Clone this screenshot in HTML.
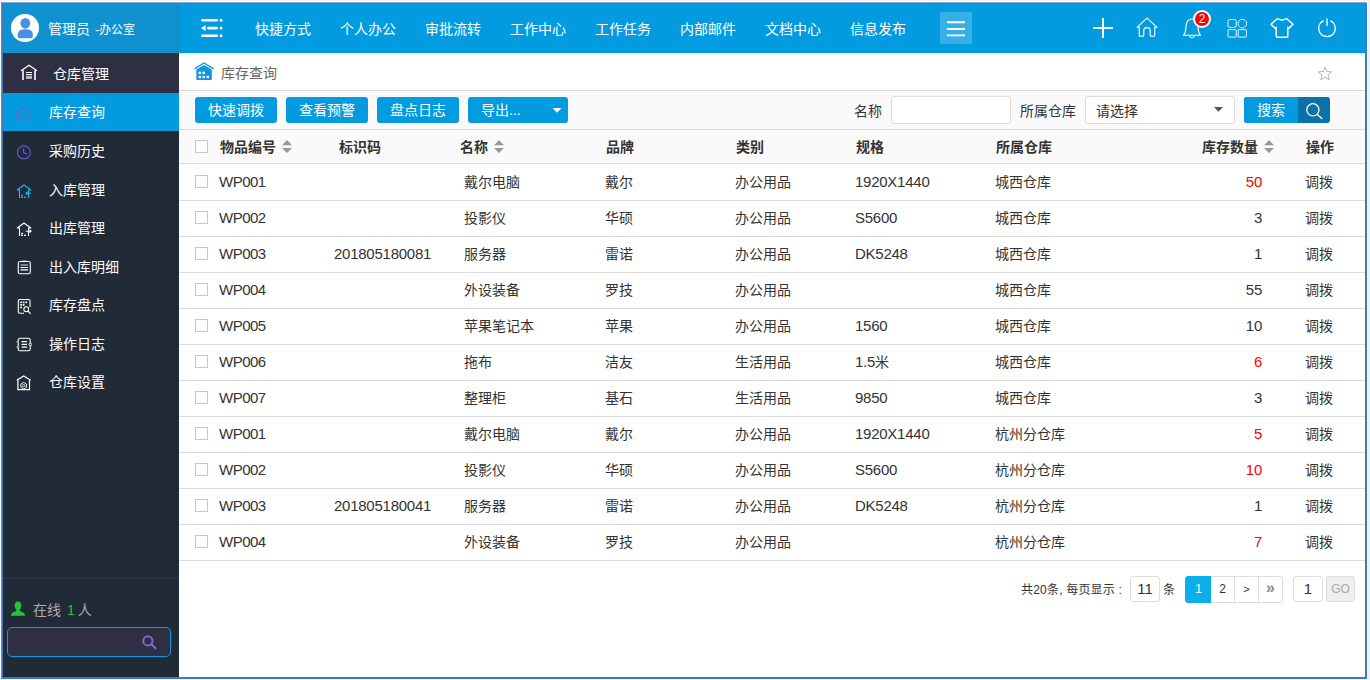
<!DOCTYPE html>
<html lang="zh-CN">
<head>
<meta charset="utf-8">
<title>库存查询</title>
<style>
html,body{margin:0;padding:0}
body{width:1370px;height:680px;position:relative;overflow:hidden;background:#fff;font-family:"Liberation Sans","Noto Sans CJK SC",sans-serif;font-size:14px;color:#333}
div,span,svg,i,b{position:absolute;box-sizing:border-box;display:block;white-space:nowrap;font-style:normal;font-weight:normal}
svg{overflow:visible}
/* window frame */
#fr-top0{left:0;top:0;width:1370px;height:1px;background:#f3f4f6}
#fr-right{left:1367px;top:0;width:3px;height:680px;background:#eeeff0;border-left:1px solid #f8f8f8}
#fr-bot{left:0;top:679px;width:1370px;height:1px;background:#f2f2f2}
#frame{left:1px;top:2px;width:1366px;height:677px;border:2px solid #4078bc;border-top:none;border-left:none}
#fl1{left:1px;top:2px;width:1px;height:677px;background:#5f8ac6}
#fl2{left:2px;top:3px;width:1px;height:674px;background:#4079be}
#ft1{left:1px;top:2px;width:1366px;height:1px;background:#8aa6d2}
#ft2{left:2px;top:3px;width:1363px;height:1px;background:#3f80c4}
/* header */
#uhead{left:3px;top:3px;width:176px;height:50px;background:#1192d0}
#nav{left:179px;top:3px;width:1186px;height:50px;background:#039be0;box-shadow:0 1px 3px rgba(0,0,0,.12)}
#avatar{left:11px;top:14px;width:28px;height:28px;border-radius:50%;background:#fff}
.uname{left:48px;top:18px;height:22px;line-height:22px;font-size:14px;color:#fff}
.uname b{position:static;display:inline;font-size:12px;margin-left:1px}
.nv{top:18px;height:22px;line-height:22px;font-size:14px;color:#fff}
#hbtn{left:940px;top:12px;width:32px;height:32px;background:#37afe7}
#badge{left:1193px;top:10px;width:18px;height:18px;border-radius:50%;background:#f00;border:2px solid #fff;color:#fff;font-size:12px;line-height:14px;text-align:center}
/* sidebar */
#side{left:3px;top:53px;width:176px;height:624px;background:#212a37}
#stitle{left:3px;top:53px;width:176px;height:40px;background:#2e2f43}
#sline{left:3px;top:577px;width:176px;height:2px;background:#2e2f43}
#sact{left:3px;top:93px;width:176px;height:38px;background:#039be0}
.st{left:53px;top:63px;height:22px;line-height:22px;font-size:14px;color:#fff}
.si{left:49px;height:22px;line-height:22px;font-size:14px;color:#fff}
#online{left:33px;top:599px;height:22px;line-height:22px;font-size:14px;color:#a9adb3}
#online{word-spacing:2px}
#online b{position:static;display:inline;color:#21c33b;margin-right:2px;letter-spacing:1px}
#sbox{left:7px;top:627px;width:164px;height:30px;border:1px solid #0c9be0;border-radius:5px;background:#2e2f43}
/* main */
#crumb{left:221px;top:62px;height:22px;line-height:22px;font-size:14px;color:#666}
.hl{left:179px;width:1186px;height:1px;background:#dbdbdb}
#tbar{left:179px;top:91px;width:1186px;height:72px;background:#fafafa}
.btn{top:97px;height:26px;line-height:26px;border-radius:3px;background:#039be0;color:#fff;font-size:14px;text-align:center}
.lbl{top:100px;height:22px;line-height:22px;font-size:14px;color:#333}
.inp{background:#fff;border:1px solid #ddd;border-radius:3px}
.th{top:136px;height:22px;line-height:22px;font-size:14px;font-weight:bold;color:#333}
.sort{top:140px;width:10px;height:13px}
.cb{width:13px;height:13px;border:1px solid #c8c8c8;background:#fff}
.tr{left:179px;width:1186px;height:37px;border-bottom:1px solid #dbdbdb}
.tr .c{top:7px;height:22px;line-height:22px;font-size:14px;color:#333}
.tr span{margin-left:-179px}
.tr .l{font-size:15px;letter-spacing:-.25px}
.tr .c i{position:static;display:inline;font-size:14px;letter-spacing:0}
.tr .q{width:100px;text-align:right}
.tr .red{color:#f00}
/* pager */
.pg{font-size:12px;color:#333;height:20px;line-height:20px;letter-spacing:.2px}
.pb{top:576px;height:27px;border:1px solid #ddd;background:#fff;font-size:12px;line-height:25px;text-align:center;color:#333}

</style>
</head>
<body>
<div id="fr-top0"></div><div id="fr-right"></div><div id="fr-bot"></div>

<!-- header -->
<div id="uhead"></div>
<div id="nav"></div>
<div id="avatar"><svg width="28" height="28" viewBox="0 0 28 28"><ellipse cx="14.3" cy="9.3" rx="4.9" ry="5.4" fill="#4a90e2"/><path d="M6.8 22.8 V20.5 Q6.8 15.2 14.3 15.2 Q21.8 15.2 21.8 20.5 V22.8 Q21.8 24.200 20.400 24.200 H8.200 Q6.800 24.200 6.800 22.800 Z" fill="#4a90e2"/></svg></div>
<div class="uname">管理员 <b>-办公室</b></div>

<svg id="fold" style="left:201px;top:18px" width="22" height="20" viewBox="0 0 22 20"><g fill="#fff"><rect x="0" y="1" width="17" height="2.6" rx="1.3"/><rect x="6" y="8.8" width="11" height="2.6" rx="1.3"/><rect x="0" y="16.4" width="17" height="2.6" rx="1.3"/><path d="M0 10.1 L4.6 7.2 V13 Z"/><circle cx="20" cy="2.3" r="1.5"/><circle cx="20" cy="10.1" r="1.5"/><circle cx="20" cy="17.7" r="1.5"/></g></svg>

<div class="nv" style="left:255px">快捷方式</div>
<div class="nv" style="left:340px">个人办公</div>
<div class="nv" style="left:425px">审批流转</div>
<div class="nv" style="left:510px">工作中心</div>
<div class="nv" style="left:595px">工作任务</div>
<div class="nv" style="left:680px">内部邮件</div>
<div class="nv" style="left:765px">文档中心</div>
<div class="nv" style="left:850px">信息发布</div>
<div id="hbtn"><svg style="left:0;top:0" width="32" height="32" viewBox="0 0 32 32"><g fill="#fff"><rect x="6.800" y="9.300" width="18.300" height="1.900" rx="0.600"/><rect x="6.800" y="16.100" width="18.300" height="1.900" rx="0.600"/><rect x="6.800" y="22.400" width="18.300" height="1.900" rx="0.600"/></g></svg></div>

<!-- right icons -->
<svg style="left:1093px;top:18px" width="20" height="20" viewBox="0 0 20 20"><path d="M10 0 V20 M0 10 H20" stroke="#fff" stroke-width="2" fill="none"/></svg>
<svg style="left:1136px;top:17px" width="22" height="20" viewBox="0 0 22 20"><path d="M1 10.3 L11 1.2 L21 10.3 H18.8 V18 Q18.8 19.3 17.5 19.3 H15.5 Q14.2 19.3 14.2 18 V13.5 Q14.2 10.6 11 10.6 Q7.8 10.6 7.8 13.5 V18 Q7.8 19.3 6.5 19.3 H4.5 Q3.2 19.3 3.2 18 V10.3 Z" stroke="#fff" stroke-width="1.1" fill="none" stroke-linejoin="round"/></svg>
<svg style="left:1182px;top:17px" width="20" height="22" viewBox="0 0 20 22"><path d="M1.5 18.3 C4 15.5 3.8 13 4 9.5 C4.3 4.5 7 2 10 2 C13 2 15.7 4.5 16 9.500 C16.2 13 16 15.5 18.5 18.3 Z" stroke="#fff" stroke-width="1.1" fill="none" stroke-linejoin="round"/><path d="M7.5 19 Q10 22.500 12.500 19" stroke="#fff" stroke-width="1.100" fill="none"/></svg>
<div id="badge">2</div>
<svg style="left:1227px;top:19px" width="21" height="19" viewBox="0 0 21 19"><g stroke="#fff" stroke-width="1" fill="none" opacity=".9"><rect x="1" y="0.6" width="8.200" height="7.800" rx="1.500"/><circle cx="15.3" cy="4.6" r="4.300"/><rect x="1" y="10.600" width="8.200" height="7.500" rx="0.500"/><rect x="11.200" y="10.600" width="8.200" height="7.500" rx="0.500"/></g></svg>
<svg style="left:1270px;top:17px" width="24" height="22" viewBox="0 0 24 22"><path d="M7.500 1.500 Q12 4.500 16.500 1.500 L23 7.300 L19 11.300 L17.800 10.300 V19 Q17.800 20.300 16.500 20.300 H7.500 Q6.200 20.300 6.200 19 V10.300 L5 11.300 L1 7.300 Z" stroke="#fff" stroke-width="1.500" fill="none" stroke-linejoin="round"/></svg>
<svg style="left:1317px;top:18px" width="20" height="20" viewBox="0 0 20 20"><path d="M6.300 2.900 A8.300 8.300 0 1 0 13.700 2.900" stroke="#fff" stroke-width="1.200" fill="none" stroke-linecap="round"/><path d="M10 1 V7.500" stroke="#fff" stroke-width="1.300" fill="none" stroke-linecap="round"/></svg>

<!-- sidebar -->
<div id="side"></div>
<div id="stitle"></div>
<div id="sact"></div>
<div id="sline"></div>
<svg style="left:20px;top:64px" width="18" height="17" viewBox="0 0 18 17"><path d="M1 6.800 L9 1.200 L17 6.800" stroke="#fff" stroke-width="1.300" fill="none"/><path d="M3 6.200 V16 M15 6.200 V16" stroke="#fff" stroke-width="1.600" fill="none"/><path d="M6 8.500 H12 M6 10.600 H12" stroke="#fff" stroke-width="1.100"/><rect x="6" y="12.200" width="6" height="2.600" fill="#c9c9d0"/></svg>
<div class="st">仓库管理</div>

<svg style="left:16px;top:107px" width="17" height="15" viewBox="0 0 17 15"><g stroke="#7260c6" stroke-width="1" fill="none" opacity=".85"><path d="M1 5.300 L8 0.700 L15 5.300 M2.500 4.800 V13.500 M13.500 4.800 V6.500"/><circle cx="12.300" cy="10.300" r="2.500"/><path d="M14.200 12.200 L15.800 13.800"/></g><g fill="#7a5cc4" opacity=".9"><rect x="4.200" y="6.700" width="1.300" height="1.300"/><rect x="7" y="6.700" width="1.300" height="1.300"/><rect x="4.200" y="9.500" width="1.300" height="1.300"/><rect x="7" y="9.500" width="1.300" height="1.300"/><rect x="4.200" y="12.300" width="1.300" height="1.300"/><rect x="7" y="12.300" width="1.300" height="1.300"/></g></svg>
<div class="si" style="top:101px">库存查询</div>

<svg style="left:16px;top:145px" width="16" height="16" viewBox="0 0 16 16"><circle cx="7.900" cy="7.400" r="6.500" stroke="#5d59d3" stroke-width="1.100" fill="none"/><path d="M7.600 3.300 V7.600 L11 9" stroke="#5d59d3" stroke-width="1.200" fill="none"/></svg>
<div class="si" style="top:140px">采购历史</div>

<svg style="left:16px;top:184px" width="17" height="15" viewBox="0 0 17 15"><g stroke="#2bb5e8" stroke-width="1.100" fill="none" stroke-linejoin="round"><path d="M3.500 14 V6 H1.300 L8 1 L14.800 6 H12.500 V14"/><path d="M15 9.200 H10 M11.500 7.700 L9.800 9.200 L11.500 10.700"/></g><g fill="#2bb5e8"><rect x="5.200" y="10.800" width="1.800" height="1.300"/><rect x="5.200" y="12.600" width="1.800" height="1.400"/><rect x="8.100" y="12.600" width="1.800" height="1.400"/></g></svg>
<div class="si" style="top:179px">入库管理</div>

<svg style="left:16px;top:222px" width="17" height="15" viewBox="0 0 17 15"><g stroke="#fff" stroke-width="1.100" fill="none" stroke-linejoin="round"><path d="M3.500 14 V6 H1.300 L8 1 L14.800 6 H12.500 V14"/><path d="M9.800 9.200 H15 M13.500 7.700 L15.200 9.200 L13.500 10.700"/></g><g fill="#fff"><rect x="5.200" y="10.800" width="1.800" height="1.300"/><rect x="5.200" y="12.600" width="1.800" height="1.400"/><rect x="8.100" y="12.600" width="1.800" height="1.400"/></g></svg>
<div class="si" style="top:217px">出库管理</div>

<svg style="left:17px;top:260px" width="15" height="15" viewBox="0 0 15 15"><rect x="1.300" y="1.500" width="12" height="12.200" rx="1.800" stroke="#fff" stroke-width="1.100" fill="none"/><rect x="5.300" y="0.600" width="4" height="1.500" fill="#fff"/><path d="M3.500 5 H11" stroke="#b9bcc2" stroke-width="1.200"/><path d="M3.500 7.500 H11 M3.500 9.900 H11" stroke="#fff" stroke-width="1.200"/></svg>
<div class="si" style="top:256px">出入库明细</div>

<svg style="left:17px;top:298px" width="16" height="17" viewBox="0 0 16 17"><path d="M7 15.300 H2.800 Q1.300 15.300 1.300 13.800 V3 Q1.300 1.500 2.800 1.500 H11.500 Q13 1.500 13 3 V9" stroke="#fff" stroke-width="1.100" fill="none"/><g fill="#fff"><rect x="3.200" y="3.500" width="1.700" height="1.700"/><rect x="5.800" y="3.500" width="1.700" height="1.700"/><rect x="8.400" y="3.500" width="1.700" height="1.700"/><rect x="3.200" y="6" width="1.700" height="1.700"/><rect x="5.800" y="6" width="1.700" height="1.700"/><rect x="3.200" y="8.600" width="1.700" height="1.700"/></g><circle cx="9.200" cy="11.200" r="2.400" stroke="#fff" stroke-width="1.100" fill="none"/><path d="M11 13 L13.600 15.800" stroke="#fff" stroke-width="1.200"/></svg>
<div class="si" style="top:294px">库存盘点</div>

<svg style="left:16px;top:337px" width="17" height="15" viewBox="0 0 17 15"><rect x="2.200" y="1.300" width="12" height="12.400" rx="1.800" stroke="#fff" stroke-width="1.100" fill="none"/><path d="M5.500 4.600 H11 M5.500 7.400 H11 M5.500 10.100 H11" stroke="#fff" stroke-width="1.200"/><path d="M0.500 4.600 H3 M0.500 10.100 H3" stroke="#b9bcc2" stroke-width="1.200"/><circle cx="14.300" cy="7.500" r="1.300" fill="#212a37" stroke="#fff" stroke-width="0.900"/></svg>
<div class="si" style="top:333px">操作日志</div>

<svg style="left:16px;top:375px" width="16" height="16" viewBox="0 0 16 16"><path d="M0.800 5.200 L7.700 1 L14.600 5.200 M1.900 4.700 V14.600 H13.500 V4.700" stroke="#fff" stroke-width="1.200" fill="none"/><path d="M7.700 7.400 L10.500 9 V12.300 L7.700 13.900 L4.900 12.300 V9 Z" stroke="#fff" stroke-width="0.900" fill="none"/><circle cx="7.700" cy="10.650" r="1.200" stroke="#fff" stroke-width="0.800" fill="none"/></svg>
<div class="si" style="top:371px">仓库设置</div>

<svg style="left:10px;top:601px" width="16" height="16" viewBox="0 0 16 16"><path d="M8 0.500 C10.300 0.500 11.300 2.300 11.300 4.500 C11.300 6.500 10.500 8 9.600 8.700 C9.600 9.600 10 10 11 10.400 C13.500 11.400 15 12 15.200 14.800 H0.800 C1 12 2.500 11.400 5 10.400 C6 10 6.400 9.600 6.400 8.700 C5.500 8 4.700 6.500 4.700 4.500 C4.700 2.300 5.700 0.500 8 0.500 Z" fill="#21c33b"/></svg>
<div id="online">在线 <b>1</b>人</div>
<div id="sbox"></div>
<svg style="left:141px;top:634px" width="16" height="16" viewBox="0 0 16 16"><circle cx="6.900" cy="6.900" r="4.600" stroke="#7b6fd0" stroke-width="1.900" fill="none"/><path d="M10.300 10.300 L14.600 14.300" stroke="#7b6fd0" stroke-width="2" stroke-linecap="round"/></svg>

<!-- breadcrumb -->
<svg style="left:194px;top:62px" width="20" height="19" viewBox="0 0 20 19"><path d="M0.400 6.900 L10 0.900 L19.600 6.900" stroke="#1296db" stroke-width="1.300" fill="none"/><path d="M2.300 7.600 L10 2.900 L17.800 7.600 V17 Q17.800 18 16.800 18 H3.300 Q2.300 18 2.300 17 Z" fill="#1296db"/><g fill="#fff"><rect x="4.600" y="9.700" width="2.400" height="2.300"/><rect x="8.500" y="9.700" width="2.400" height="2.300"/><rect x="4.600" y="13.800" width="2.400" height="2.300"/><rect x="8.500" y="13.800" width="2.400" height="2.300"/><rect x="12.600" y="13.800" width="2.400" height="2.300"/></g></svg>
<div id="crumb">库存查询</div>
<svg style="left:1317px;top:66px" width="16" height="15" viewBox="0 0 16 15"><path d="M8 0.900 L9.900 5.500 L14.800 5.900 L11.050 9.100 L12.200 13.900 L8 11.300 L3.800 13.900 L4.950 9.100 L1.200 5.900 L6.100 5.500 Z" stroke="#9badc2" stroke-width="0.900" fill="none" stroke-linejoin="miter"/></svg>

<!-- toolbar + table head -->
<div id="tbar"></div>
<div class="hl" style="top:90px"></div>
<div class="hl" style="top:129px"></div>
<div class="hl" style="top:163px"></div>
<div class="btn" style="left:195px;width:82px">快速调拨</div>
<div class="btn" style="left:286px;width:82px">查看预警</div>
<div class="btn" style="left:377px;width:82px">盘点日志</div>
<div class="btn" style="left:468px;width:100px;text-align:left;padding-left:13px">导出...</div>
<svg style="left:552px;top:108px" width="10" height="5" viewBox="0 0 10 5"><path d="M0.500 0 H9.500 L5 4.700 Z" fill="#fff"/></svg>

<div class="lbl" style="left:854px">名称</div>
<div class="inp" style="left:891px;top:96px;width:120px;height:28px"></div>
<div class="lbl" style="left:1020px">所属仓库</div>
<div class="inp" style="left:1085px;top:96px;width:150px;height:28px"></div>
<div class="lbl" style="left:1096px">请选择</div>
<svg style="left:1214px;top:107px" width="9" height="5" viewBox="0 0 9 5"><path d="M0 0 H9 L4.500 4.800 Z" fill="#555"/></svg>
<div class="btn" style="left:1244px;width:86px;background:#0b72a8"></div>
<div class="btn" style="left:1244px;width:54px;border-radius:3px 0 0 3px">搜索</div>
<svg style="left:1305px;top:102px" width="18" height="18" viewBox="0 0 18 18"><circle cx="7.900" cy="7.800" r="6.100" stroke="#fff" stroke-width="1.300" fill="none"/><path d="M12.400 12.400 L16.800 16.500" stroke="#fff" stroke-width="1.300" stroke-linecap="round"/></svg>

<span class="cb" style="left:195px;top:140px"></span>
<div class="th" style="left:220px">物品编号</div>
<svg class="sort" style="left:282px" viewBox="0 0 10 13"><path d="M0 5.300 L5 0 L10 5.300 Z M0 7.900 H10 L5 13 Z" fill="#999"/></svg>
<div class="th" style="left:339px">标识码</div>
<div class="th" style="left:460px">名称</div>
<svg class="sort" style="left:494px" viewBox="0 0 10 13"><path d="M0 5.300 L5 0 L10 5.300 Z M0 7.900 H10 L5 13 Z" fill="#999"/></svg>
<div class="th" style="left:606px">品牌</div>
<div class="th" style="left:736px">类别</div>
<div class="th" style="left:856px">规格</div>
<div class="th" style="left:996px">所属仓库</div>
<div class="th" style="left:1202px">库存数量</div>
<svg class="sort" style="left:1264px" viewBox="0 0 10 13"><path d="M0 5.300 L5 0 L10 5.300 Z M0 7.900 H10 L5 13 Z" fill="#999"/></svg>
<div class="th" style="left:1306px">操作</div>

<!-- rows -->
<div class="tr" style="top:164px"><span class="cb" style="left:195px;top:11px"></span><span class="c l" style="left:219px;letter-spacing:-.5px">WP001</span><span class="c" style="left:464px">戴尔电脑</span><span class="c" style="left:605px">戴尔</span><span class="c" style="left:735px">办公用品</span><span class="c l" style="left:855px">1920X1440</span><span class="c" style="left:995px">城西仓库</span><span class="c l q red" style="left:1162px">50</span><span class="c" style="left:1305px">调拨</span></div>
<div class="tr" style="top:200px"><span class="cb" style="left:195px;top:11px"></span><span class="c l" style="left:219px;letter-spacing:-.5px">WP002</span><span class="c" style="left:464px">投影仪</span><span class="c" style="left:605px">华硕</span><span class="c" style="left:735px">办公用品</span><span class="c l" style="left:855px">S5600</span><span class="c" style="left:995px">城西仓库</span><span class="c l q" style="left:1162px">3</span><span class="c" style="left:1305px">调拨</span></div>
<div class="tr" style="top:236px"><span class="cb" style="left:195px;top:11px"></span><span class="c l" style="left:219px;letter-spacing:-.5px">WP003</span><span class="c l" style="left:334px">201805180081</span><span class="c" style="left:464px">服务器</span><span class="c" style="left:605px">雷诺</span><span class="c" style="left:735px">办公用品</span><span class="c l" style="left:855px">DK5248</span><span class="c" style="left:995px">城西仓库</span><span class="c l q" style="left:1162px">1</span><span class="c" style="left:1305px">调拨</span></div>
<div class="tr" style="top:272px"><span class="cb" style="left:195px;top:11px"></span><span class="c l" style="left:219px;letter-spacing:-.5px">WP004</span><span class="c" style="left:464px">外设装备</span><span class="c" style="left:605px">罗技</span><span class="c" style="left:735px">办公用品</span><span class="c" style="left:995px">城西仓库</span><span class="c l q" style="left:1162px">55</span><span class="c" style="left:1305px">调拨</span></div>
<div class="tr" style="top:308px"><span class="cb" style="left:195px;top:11px"></span><span class="c l" style="left:219px;letter-spacing:-.5px">WP005</span><span class="c" style="left:464px">苹果笔记本</span><span class="c" style="left:605px">苹果</span><span class="c" style="left:735px">办公用品</span><span class="c l" style="left:855px">1560</span><span class="c" style="left:995px">城西仓库</span><span class="c l q" style="left:1162px">10</span><span class="c" style="left:1305px">调拨</span></div>
<div class="tr" style="top:344px"><span class="cb" style="left:195px;top:11px"></span><span class="c l" style="left:219px;letter-spacing:-.5px">WP006</span><span class="c" style="left:464px">拖布</span><span class="c" style="left:605px">洁友</span><span class="c" style="left:735px">生活用品</span><span class="c l" style="left:855px">1.5<i>米</i></span><span class="c" style="left:995px">城西仓库</span><span class="c l q red" style="left:1162px">6</span><span class="c" style="left:1305px">调拨</span></div>
<div class="tr" style="top:380px"><span class="cb" style="left:195px;top:11px"></span><span class="c l" style="left:219px;letter-spacing:-.5px">WP007</span><span class="c" style="left:464px">整理柜</span><span class="c" style="left:605px">基石</span><span class="c" style="left:735px">生活用品</span><span class="c l" style="left:855px">9850</span><span class="c" style="left:995px">城西仓库</span><span class="c l q" style="left:1162px">3</span><span class="c" style="left:1305px">调拨</span></div>
<div class="tr" style="top:416px"><span class="cb" style="left:195px;top:11px"></span><span class="c l" style="left:219px;letter-spacing:-.5px">WP001</span><span class="c" style="left:464px">戴尔电脑</span><span class="c" style="left:605px">戴尔</span><span class="c" style="left:735px">办公用品</span><span class="c l" style="left:855px">1920X1440</span><span class="c" style="left:995px">杭州分仓库</span><span class="c l q red" style="left:1162px">5</span><span class="c" style="left:1305px">调拨</span></div>
<div class="tr" style="top:452px"><span class="cb" style="left:195px;top:11px"></span><span class="c l" style="left:219px;letter-spacing:-.5px">WP002</span><span class="c" style="left:464px">投影仪</span><span class="c" style="left:605px">华硕</span><span class="c" style="left:735px">办公用品</span><span class="c l" style="left:855px">S5600</span><span class="c" style="left:995px">杭州分仓库</span><span class="c l q red" style="left:1162px">10</span><span class="c" style="left:1305px">调拨</span></div>
<div class="tr" style="top:488px"><span class="cb" style="left:195px;top:11px"></span><span class="c l" style="left:219px;letter-spacing:-.5px">WP003</span><span class="c l" style="left:334px">201805180041</span><span class="c" style="left:464px">服务器</span><span class="c" style="left:605px">雷诺</span><span class="c" style="left:735px">办公用品</span><span class="c l" style="left:855px">DK5248</span><span class="c" style="left:995px">杭州分仓库</span><span class="c l q" style="left:1162px">1</span><span class="c" style="left:1305px">调拨</span></div>
<div class="tr" style="top:524px"><span class="cb" style="left:195px;top:11px"></span><span class="c l" style="left:219px;letter-spacing:-.5px">WP004</span><span class="c" style="left:464px">外设装备</span><span class="c" style="left:605px">罗技</span><span class="c" style="left:735px">办公用品</span><span class="c" style="left:995px">杭州分仓库</span><span class="c l q red" style="left:1162px">7</span><span class="c" style="left:1305px">调拨</span></div>

<!-- pager -->
<div class="pg" style="left:1021px;top:580px">共20条, 每页显示 :</div>
<div class="pb" style="left:1130px;width:30px;height:26px;border-radius:3px;font-size:15px;line-height:24px">11</div>
<div class="pg" style="left:1163px;top:580px">条</div>
<div class="pb" style="left:1185px;width:27px;background:#09aeeb;border-color:#09aeeb;color:#fff;border-radius:3px 0 0 3px">1</div>
<div class="pb" style="left:1211px;width:24px;border-left:none">2</div>
<div class="pb" style="left:1235px;width:24px;border-left:none;font-size:11px">&gt;</div>
<div class="pb" style="left:1259px;width:24px;border-left:none;border-radius:0 3px 3px 0;color:#888;font-size:16px;font-weight:bold;line-height:22px">»</div>
<div class="pb" style="left:1293px;width:30px;height:26px;border-radius:3px;font-size:15px;line-height:24px">1</div>
<div class="pb" style="left:1326px;width:29px;height:26px;border-radius:3px;background:#eee;color:#aaa;line-height:24px">GO</div>

<div id="frame"></div><div id="ft1"></div><div id="ft2"></div><div id="fl1"></div><div id="fl2"></div>
</body>
</html>
